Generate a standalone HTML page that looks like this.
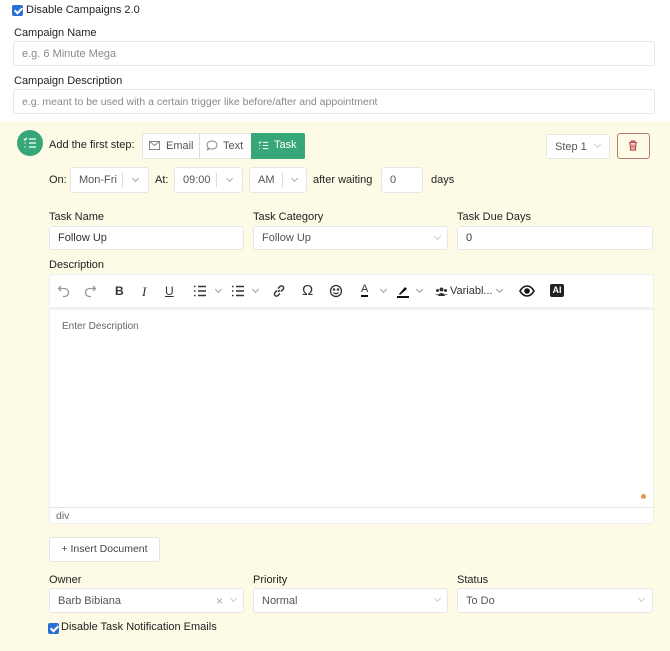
<!DOCTYPE html>
<html><head><meta charset="utf-8"><style>
*{box-sizing:border-box;margin:0;padding:0}
body{width:670px;height:651px;background:#fff;font-family:"Liberation Sans",sans-serif;color:#222;position:relative;overflow:hidden;font-size:11px}
.a{position:absolute}
.lbl{position:absolute;font-size:11px;color:#222}
.inp{position:absolute;background:#fff;border:1px solid #e6e6e6;border-radius:3px;font-size:11px;color:#555;padding-left:8px;display:flex;align-items:center}
.ph{color:#888}
.chev{position:absolute;width:5px;height:5px;border-right:1px solid #aaa;border-bottom:1px solid #aaa;transform:rotate(45deg)}
.cb{position:absolute;width:11px;height:11px;background:#2b6fd6;border-radius:2px}
.cb:after{content:"";position:absolute;left:3.5px;top:1px;width:3px;height:6px;border-right:2px solid #fff;border-bottom:2px solid #fff;transform:rotate(45deg)}
.sep{position:absolute;width:1px;background:#ddd}
.tb{position:absolute;top:284px;font-size:13px;color:#333}
</style></head><body>
<div class="cb" style="left:12px;top:5px"></div>
<div class="a" style="left:26px;top:4px;font-size:11px">Disable Campaigns 2.0</div>
<div class="lbl" style="left:14px;top:27px">Campaign Name</div>
<div class="inp" style="left:13px;top:41px;width:642px;height:25px"><span class="ph">e.g. 6 Minute Mega</span></div>
<div class="lbl" style="left:14px;top:75px">Campaign Description</div>
<div class="inp" style="left:13px;top:89px;width:642px;height:25px"><span class="ph" style="font-size:10.5px">e.g. meant to be used with a certain trigger like before/after and appointment</span></div>

<div class="a" style="left:0;top:121px;width:670px;height:530px;background:#fdfae6"></div>

<div class="a" style="left:17px;top:130px;width:26px;height:26px;border-radius:50%;background:#37a779"></div>
<svg class="a" style="left:23px;top:136px" width="14" height="14" viewBox="0 0 14 14" stroke="#fff" stroke-width="1.3" fill="none"><path d="M6 3h7M6 7h7M6 11h7M1 3l1 1 2-2M1.5 7h1M1.5 11h1"/></svg>
<div class="a" style="left:49px;top:139px;font-size:11px">Add the first step:</div>
<div class="a" style="left:142px;top:133px;width:163px;height:26px;background:#fff;border:1px solid #e5e5e5;border-radius:2px"></div>
<div class="sep" style="left:199px;top:133px;height:26px"></div>
<svg class="a" style="left:149px;top:141px" width="11" height="9" viewBox="0 0 11 9" fill="none" stroke="#888"><rect x=".5" y=".5" width="10" height="8"/><path d="M.5 .5l5 4 5-4"/></svg>
<div class="a" style="left:166px;top:140px;font-size:11px;color:#555">Email</div>
<svg class="a" style="left:206px;top:140px" width="12" height="11" viewBox="0 0 12 11" fill="none" stroke="#888"><path d="M6 1c3 0 5 1.8 5 4s-2 4-5 4c-1 0-2-.2-2.5-.5L1.5 10l.7-2.3C1.4 6.9 1 6 1 5c0-2.2 2-4 5-4z"/></svg>
<div class="a" style="left:223px;top:140px;font-size:11px;color:#555">Text</div>
<div class="a" style="left:251px;top:133px;width:54px;height:26px;background:#37a779;border-radius:0 2px 2px 0"></div>
<svg class="a" style="left:258px;top:140px" width="11" height="11" viewBox="0 0 14 14" stroke="#fff" stroke-width="1.3" fill="none"><path d="M6 3h7M6 7h7M6 11h7M1 3l1 1 2-2M1.5 7h1M1.5 11h1"/></svg>
<div class="a" style="left:274px;top:139px;font-size:11px;color:#fff">Task</div>

<div class="inp" style="left:546px;top:134px;width:64px;height:25px;padding-left:8px">Step 1</div>
<div class="chev" style="left:595px;top:142px;border-color:#ccc"></div>
<div class="a" style="left:617px;top:133px;width:33px;height:26px;border:1px solid #b67b74;border-radius:3px;background:#fdfae6"></div>
<svg class="a" style="left:628px;top:140px" width="10" height="11" viewBox="0 0 10 11" fill="none" stroke="#c0464a" stroke-width="1.2"><path d="M1 2.5h8M3.5 2.5V1h3v1.5M2 2.5l.6 7.5h4.8L8 2.5M4 4.5v4M6 4.5v4"/></svg>

<div class="a" style="left:49px;top:174px;font-size:11px">On:</div>
<div class="inp" style="left:70px;top:167px;width:79px;height:26px">Mon-Fri</div>
<div class="sep" style="left:122px;top:173px;height:14px"></div>
<div class="chev" style="left:133px;top:176px"></div>
<div class="a" style="left:155px;top:174px;font-size:11px">At:</div>
<div class="inp" style="left:174px;top:167px;width:69px;height:26px">09:00</div>
<div class="sep" style="left:216px;top:173px;height:14px"></div>
<div class="chev" style="left:227px;top:176px"></div>
<div class="inp" style="left:249px;top:167px;width:58px;height:26px">AM</div>
<div class="sep" style="left:282px;top:173px;height:14px"></div>
<div class="chev" style="left:292px;top:176px"></div>
<div class="a" style="left:313px;top:174px;font-size:11px">after waiting</div>
<div class="inp" style="left:381px;top:167px;width:42px;height:26px">0</div>
<div class="a" style="left:431px;top:174px;font-size:11px">days</div>

<div class="lbl" style="left:49px;top:211px">Task Name</div>
<div class="lbl" style="left:253px;top:211px">Task Category</div>
<div class="lbl" style="left:457px;top:211px">Task Due Days</div>
<div class="inp" style="left:49px;top:226px;width:195px;height:24px;color:#333">Follow Up</div>
<div class="inp" style="left:253px;top:226px;width:195px;height:24px">Follow Up</div>
<div class="chev" style="left:435px;top:234px;border-color:#ccc"></div>
<div class="inp" style="left:457px;top:226px;width:196px;height:24px;color:#333">0</div>

<div class="lbl" style="left:49px;top:259px">Description</div>
<div class="a" style="left:49px;top:274px;width:605px;height:250px;background:#fff;border:1px solid #eee;border-radius:4px"></div>
<div class="a" style="left:50px;top:307px;width:603px;height:3px;background:#f1f1f1"></div>
<div class="a" style="left:50px;top:507px;width:603px;height:1px;background:#e6e6e6"></div>
<div class="a" style="left:56px;top:510px;font-size:10.5px;color:#666">div</div>
<div class="a" style="left:62px;top:321px;font-size:10px;color:#666">Enter Description</div>
<div class="a" style="left:641px;top:494px;width:5px;height:5px;border-radius:50%;background:#e8964a"></div>

<svg class="a" style="left:57px;top:284px" width="14" height="14" viewBox="0 0 14 14" fill="none" stroke="#999" stroke-width="1.3"><path d="M4 2L1.5 4.5 4 7M1.5 4.5h6a4 4 0 010 8H6"/></svg>
<svg class="a" style="left:83px;top:284px" width="14" height="14" viewBox="0 0 14 14" fill="none" stroke="#999" stroke-width="1.3"><path d="M10 2l2.5 2.5L10 7M12.5 4.5h-6a4 4 0 000 8H8"/></svg>
<div class="tb" style="left:115px;font-weight:bold;font-size:12px">B</div>
<div class="tb" style="left:142px;font-style:italic;font-family:'Liberation Serif',serif">I</div>
<div class="tb" style="left:165px;text-decoration:underline;font-size:12px">U</div>
<svg class="a" style="left:193px;top:285px" width="14" height="12" viewBox="0 0 14 12" fill="none" stroke="#333" stroke-width="1.5"><path d="M5 1.5h8M5 6h8M5 10.5h8M1 1.5h1.5M1 6h1.5M1 10.5h1.5"/></svg>
<div class="chev" style="left:216px;top:287px;border-color:#999"></div>
<svg class="a" style="left:231px;top:285px" width="14" height="12" viewBox="0 0 14 12" fill="none" stroke="#333" stroke-width="1.5"><path d="M5 1.5h8M5 6h8M5 10.5h8M1 1.5h1.5M1 6h1.5M1 10.5h1.5"/></svg>
<div class="chev" style="left:253px;top:287px;border-color:#999"></div>
<svg class="a" style="left:272px;top:284px" width="14" height="14" viewBox="0 0 14 14" fill="none" stroke="#333" stroke-width="1.5"><path d="M6 8l2-2M5 6.5L3 8.5a2 2 0 003 3l2-2M9 7.5l2-2a2 2 0 00-3-3l-2 2"/></svg>
<div class="tb" style="left:302px;top:282px;font-size:15px">Ω</div>
<svg class="a" style="left:329px;top:284px" width="14" height="14" viewBox="0 0 14 14" fill="none" stroke="#333" stroke-width="1.3"><circle cx="7" cy="7" r="5.5"/><path d="M4.5 8.5c1.3 1.6 3.7 1.6 5 0"/><circle cx="5" cy="5.5" r=".6" fill="#333"/><circle cx="9" cy="5.5" r=".6" fill="#333"/></svg>
<div class="tb" style="left:361px;font-size:11px;border-bottom:2px solid #111;line-height:11px">A</div>
<div class="chev" style="left:381px;top:287px;border-color:#999"></div>
<svg class="a" style="left:396px;top:284px" width="14" height="14" viewBox="0 0 14 14"><path d="M3 10l6-7 2 2-7 6z" fill="#111"/><rect x="1" y="12" width="12" height="2" fill="#111"/></svg>
<div class="chev" style="left:417px;top:287px;border-color:#999"></div>
<svg class="a" style="left:435px;top:287px" width="13" height="9" viewBox="0 0 13 9" fill="#333"><circle cx="6.5" cy="2.5" r="2"/><circle cx="2.5" cy="3.5" r="1.5"/><circle cx="10.5" cy="3.5" r="1.5"/><path d="M3 9a3.5 3 0 017 0zM0 8a2.5 2 0 014 0zM9 8a2.5 2 0 014 0z"/></svg>
<div class="a" style="left:450px;top:285px;font-size:11px;color:#333">Variabl...</div>
<div class="chev" style="left:497px;top:287px;border-color:#999"></div>
<svg class="a" style="left:519px;top:285px" width="16" height="12" viewBox="0 0 16 12" fill="none" stroke="#111" stroke-width="1.6"><path d="M1 6c2-3.5 4.5-5 7-5s5 1.5 7 5c-2 3.5-4.5 5-7 5S3 9.5 1 6z"/><circle cx="8" cy="6" r="2" fill="#111"/></svg>
<div class="a" style="left:550px;top:284px;width:14px;height:13px;background:#222;border-radius:2px;color:#fff;font-size:9px;font-weight:bold;text-align:center;line-height:13px">AI</div>

<div class="a" style="left:49px;top:537px;width:111px;height:25px;background:#fff;border:1px solid #e3e3e3;border-radius:3px;font-size:10.5px;color:#444;text-align:center;line-height:23px">+ Insert Document</div>

<div class="lbl" style="left:49px;top:574px">Owner</div>
<div class="lbl" style="left:253px;top:574px">Priority</div>
<div class="lbl" style="left:457px;top:574px">Status</div>
<div class="inp" style="left:49px;top:588px;width:195px;height:25px">Barb Bibiana</div>
<div class="a" style="left:216px;top:594px;font-size:12px;color:#aaa">×</div>
<div class="chev" style="left:231px;top:596px;border-color:#ccc"></div>
<div class="inp" style="left:253px;top:588px;width:195px;height:25px">Normal</div>
<div class="chev" style="left:435px;top:596px;border-color:#ccc"></div>
<div class="inp" style="left:457px;top:588px;width:196px;height:25px">To Do</div>
<div class="chev" style="left:639px;top:596px;border-color:#ccc"></div>

<div class="cb" style="left:48px;top:623px"></div>
<div class="a" style="left:61px;top:621px;font-size:11px">Disable Task Notification Emails</div>
</body></html>
